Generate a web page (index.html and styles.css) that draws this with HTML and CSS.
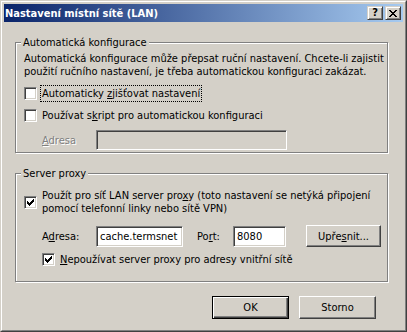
FILE: index.html
```html
<!DOCTYPE html>
<html>
<head>
  <link rel="stylesheet" href="styles.css">
</head>
<body>
  <div class="window">
    <div class="frame">
      <div class="titlebar">
        <span class="title">Nastavení místní sítě (LAN)</span>
        <div class="caption-buttons">
          <span class="cap-btn help">?</span>
          <span class="cap-btn close">
            <svg width="8" height="7" viewBox="0 0 8 7" shape-rendering="crispEdges"><path d="M0 0h2v1H0zM6 0h2v1H6zM1 1h2v1H1zM5 1h2v1H5zM2 2h4v1H2zM3 3h2v1H3zM2 4h4v1H2zM1 5h2v1H1zM5 5h2v1H5zM0 6h2v1H0zM6 6h2v1H6z" fill="#000"/></svg>
          </span>
        </div>
      </div>

      <div class="dialog-body">
        <div class="group group-auto">
          <div class="group-title">Automatická konfigurace</div>
          <p class="desc">Automatická konfigurace může přepsat ruční nastavení. Chcete-li zajistit<br>použití ručního nastavení, je třeba automatickou konfiguraci zakázat.</p>

          <div class="check-row first">
            <span class="checkbox"></span>
            <span class="check-label focused">Automaticky <u>z</u>jišťovat nastavení</span>
          </div>
          <div class="check-row">
            <span class="checkbox"></span>
            <span class="check-label">Používat s<u>k</u>ript pro automatickou konfiguraci</span>
          </div>
          <div class="field-row script-row">
            <span class="field-label disabled"><u>A</u>dresa</span>
            <span class="textbox disabled wide"></span>
          </div>
        </div>

        <div class="group group-proxy">
          <div class="group-title">Server proxy</div>
          <div class="check-row proxy-check">
            <span class="checkbox checked">
              <svg width="9" height="9" viewBox="0 0 9 9" shape-rendering="crispEdges"><path d="M1 3h1v3H1zM2 4h1v3H2zM3 5h1v3H3zM4 4h1v3H4zM5 3h1v3H5zM6 2h1v3H6zM7 1h1v3H7z" fill="#000"/></svg>
            </span>
            <span class="check-label">Použít pro síť LAN server pro<u>x</u>y (toto nastavení se netýká připojení<br>pomocí telefonní linky nebo sítě VPN)</span>
          </div>
          <div class="field-row proxy-row">
            <span class="field-label">A<u>d</u>resa:</span>
            <span class="textbox address">cache.termsnet</span>
            <span class="field-label port-label">Po<u>r</u>t:</span>
            <span class="textbox port">8080</span>
            <button class="btn advanced">Upře<u>s</u>nit...</button>
          </div>
          <div class="check-row bypass">
            <span class="checkbox checked">
              <svg width="9" height="9" viewBox="0 0 9 9" shape-rendering="crispEdges"><path d="M1 3h1v3H1zM2 4h1v3H2zM3 5h1v3H3zM4 4h1v3H4zM5 3h1v3H5zM6 2h1v3H6zM7 1h1v3H7z" fill="#000"/></svg>
            </span>
            <span class="check-label"><u>N</u>epoužívat server proxy pro adresy vnitřní sítě</span>
          </div>
        </div>

        <div class="actions">
          <button class="btn default">OK</button>
          <button class="btn">Storno</button>
        </div>
      </div>
    </div>
  </div>
</body>
</html>
```

FILE: styles.css
```css
* {
  box-sizing: border-box;
  margin: 0;
  padding: 0;
}

body {
  width: 407px;
  height: 332px;
  overflow: hidden;
  background: #d4d0c8;
  font-family: "DejaVu Sans Condensed", "DejaVu Sans", sans-serif;
  font-stretch: condensed;
  font-size: 11px;
  line-height: 13px;
  color: #000;
}

u {
  text-decoration: underline;
  text-underline-offset: 1px;
}

.window {
  width: 407px;
  height: 332px;
  border: 1px solid;
  border-color: #d4d0c8 #404040 #404040 #d4d0c8;
}

.frame {
  height: 100%;
  border: 1px solid;
  border-color: #fff #808080 #808080 #fff;
  padding: 2px;
  background: #d4d0c8;
}

/* title bar */
.titlebar {
  height: 18px;
  display: flex;
  align-items: center;
  justify-content: space-between;
  padding: 0 2px 0 1px;
  background: linear-gradient(to right, #0a246a, #a6caf0);
}

.title {
  color: #fff;
  font-weight: bold;
}

.caption-buttons {
  display: flex;
  gap: 2px;
}

.cap-btn {
  width: 16px;
  height: 14px;
  display: flex;
  align-items: center;
  justify-content: center;
  background: #d4d0c8;
  border: 1px solid;
  border-color: #d4d0c8 #404040 #404040 #d4d0c8;
  box-shadow: inset 1px 1px #fff, inset -1px -1px #808080;
  font-weight: bold;
  font-size: 11px;
  line-height: 12px;
}

/* body */
.dialog-body {
  padding: 20px 0 0 11px;
}

.group {
  width: 373px;
  border: 1px solid #808080;
  box-shadow: inset 1px 1px #fff, 1px 1px #fff;
  padding: 0 0 0 8px;
}

.group-title {
  display: table;
  margin: -7px 0 0 -3px;
  padding: 0 2px;
  background: #d4d0c8;
}

.desc {
  margin-top: 3px;
}

.check-row {
  display: flex;
  align-items: center;
  gap: 5px;
  margin-top: 9px;
}

.checkbox {
  flex: 0 0 13px;
  width: 13px;
  height: 13px;
  background: #fff;
  border: 1px solid;
  border-color: #808080 #fff #fff #808080;
  box-shadow: inset 1px 1px #404040, inset -1px -1px #d4d0c8;
  padding: 1px;
  display: flex;
}

.checkbox svg {
  display: block;
}

.check-label.focused {
  outline: 1px dotted #000;
  outline-offset: 1px;
}

.field-row {
  display: flex;
  align-items: center;
}

.script-row {
  margin-top: 8px;
  padding-left: 18px;
}

.field-label {
  width: 54px;
}

.field-label.disabled {
  color: #808080;
  text-shadow: 1px 1px #fff;
}

.textbox {
  height: 21px;
  padding: 3px 3px 0;
  background: #fff;
  border: 1px solid;
  border-color: #808080 #fff #fff #808080;
  box-shadow: inset 1px 1px #404040, inset -1px -1px #d4d0c8;
}

.textbox.disabled {
  background: #d4d0c8;
  height: 20px;
}

.textbox.wide {
  width: 191px;
}

.group-auto {
  padding-bottom: 2px;
}

.group-proxy {
  margin-top: 20px;
  padding-bottom: 15px;
}

.proxy-check {
  margin-top: 9px;
}

.proxy-row {
  margin-top: 10px;
  padding-left: 18px;
}

.textbox.address {
  width: 87px;
}

.port-label {
  width: auto;
  margin-left: 14px;
  flex: 0 0 36px;
}

.textbox.port {
  width: 53px;
}

.btn {
  font: inherit;
  color: #000;
  height: 23px;
  width: 77px;
  background: #d4d0c8;
  border: 1px solid;
  border-color: #fff #404040 #404040 #fff;
  box-shadow: inset -1px -1px #808080;
  display: flex;
  align-items: center;
  justify-content: center;
}

.btn.advanced {
  width: 75px;
  height: 22px;
  margin-left: 20px;
}

.bypass {
  margin-top: 6px;
  padding-left: 18px;
}

.actions {
  display: flex;
  justify-content: flex-end;
  gap: 10px;
  margin-top: 14px;
  padding-right: 27px;
}

.btn.default {
  border: 1px solid #000;
  box-shadow: inset 1px 1px #fff, inset -1px -1px #404040, inset -2px -2px #808080;
}
```
